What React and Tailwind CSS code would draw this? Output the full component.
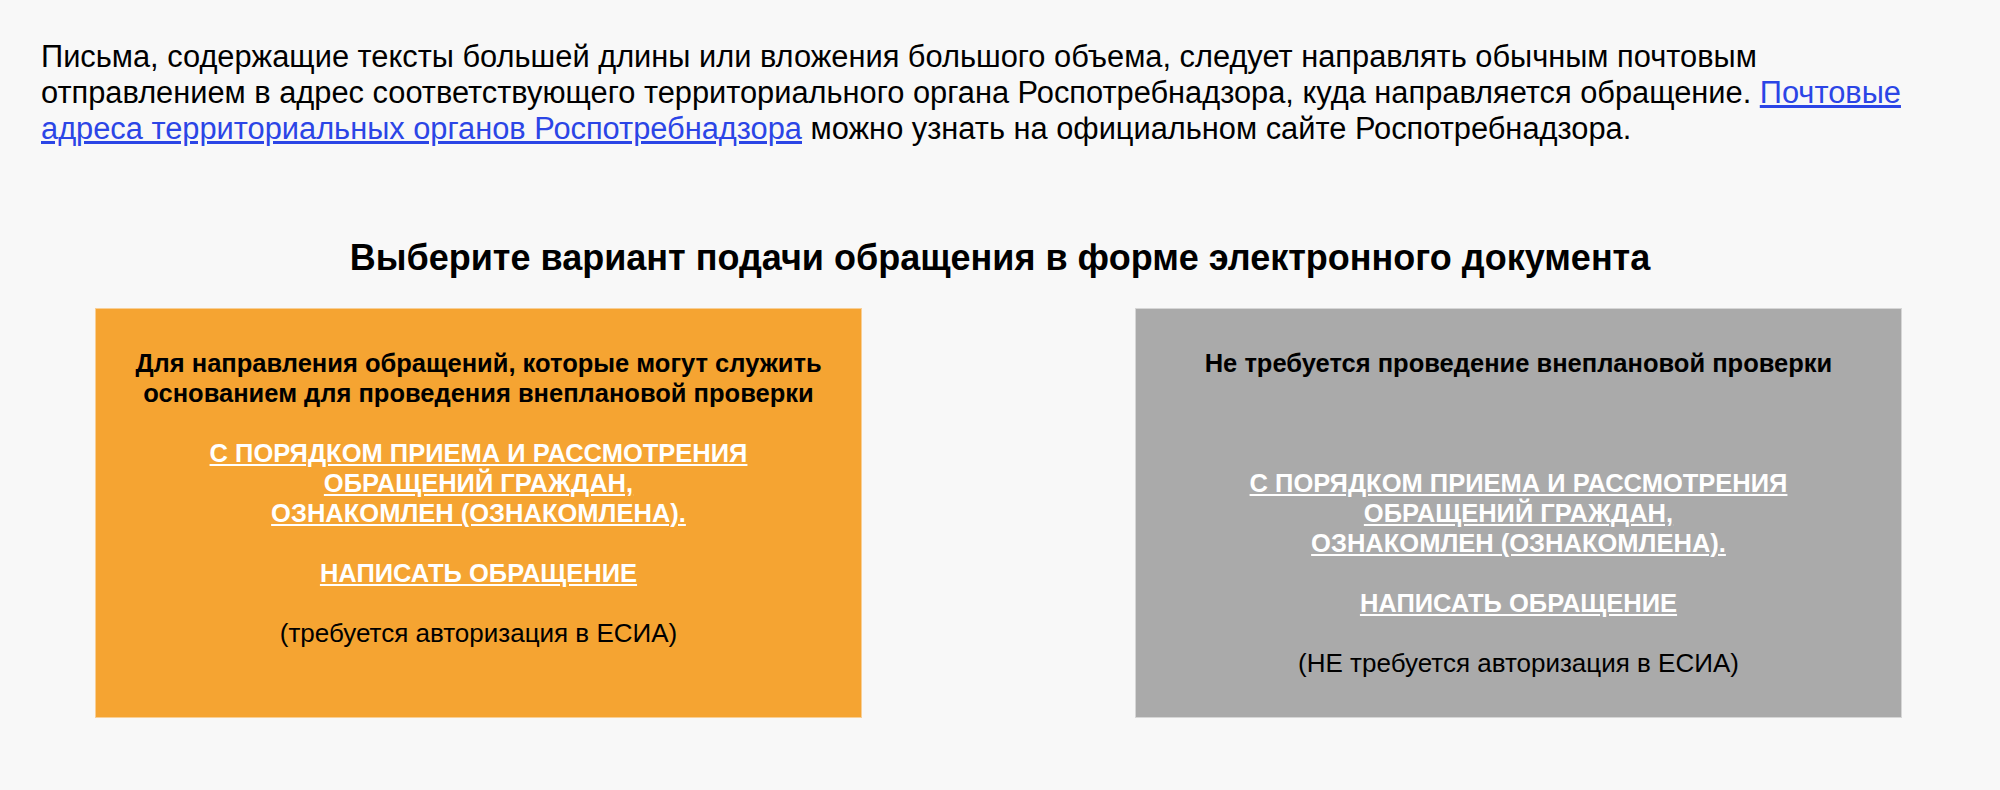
import React from 'react';

const Option = ({ tone, title, gap, auth }) => (
  <div
    className={`w-[767px] h-[410px] border pt-[39px] text-center text-[25.5px] leading-[30px] text-black ${
      tone === 'orange' ? 'bg-[#f5a432] border-[#f9cf95]' : 'bg-[#aaaaaa] border-[#d6d6d6]'
    }`}
  >
    <div className="font-bold px-4">{title}</div>
    <div className={gap ? 'h-[90px]' : 'h-[30px]'} />
    <a href="#" className="font-bold text-white underline uppercase">
      С порядком приема и рассмотрения
      <br />
      обращений граждан,
      <br />
      ознакомлен (ознакомлена).
    </a>
    <div className="h-[30px]" />
    <a href="#" className="block font-bold text-white underline uppercase">
      Написать обращение
    </a>
    <div className="h-[30px]" />
    <div className="text-[26px]">{auth}</div>
  </div>
);

export default function App() {
  return (
    <div className="min-h-[790px] bg-[#f8f8f8] px-[41px] pt-[39px] font-['Liberation_Sans',Arial,sans-serif] text-black">
      <p className="text-[30.8px] leading-[36px]">
        Письма, содержащие тексты большей длины или вложения большого объема, следует направлять обычным почтовым
        отправлением в адрес соответствующего территориального органа Роспотребнадзора, куда направляется обращение.{' '}
        <a href="#" className="text-[#2b45e6] underline">
          Почтовые адреса территориальных органов Роспотребнадзора
        </a>{' '}
        можно узнать на официальном сайте Роспотребнадзора.
      </p>

      <h2 className="mt-[91px] text-center text-[36px] leading-[40px] font-bold">
        Выберите вариант подачи обращения в форме электронного документа
      </h2>

      <div className="mt-[30px] flex justify-between pl-[54px] pr-[57px]">
        <Option
          tone="orange"
          title={
            <>
              Для направления обращений, которые могут служить
              <br />
              основанием для проведения внеплановой проверки
            </>
          }
          auth="(требуется авторизация в ЕСИА)"
        />
        <Option tone="gray" gap title="Не требуется проведение внеплановой проверки" auth="(НЕ требуется авторизация в ЕСИА)" />
      </div>
    </div>
  );
}
